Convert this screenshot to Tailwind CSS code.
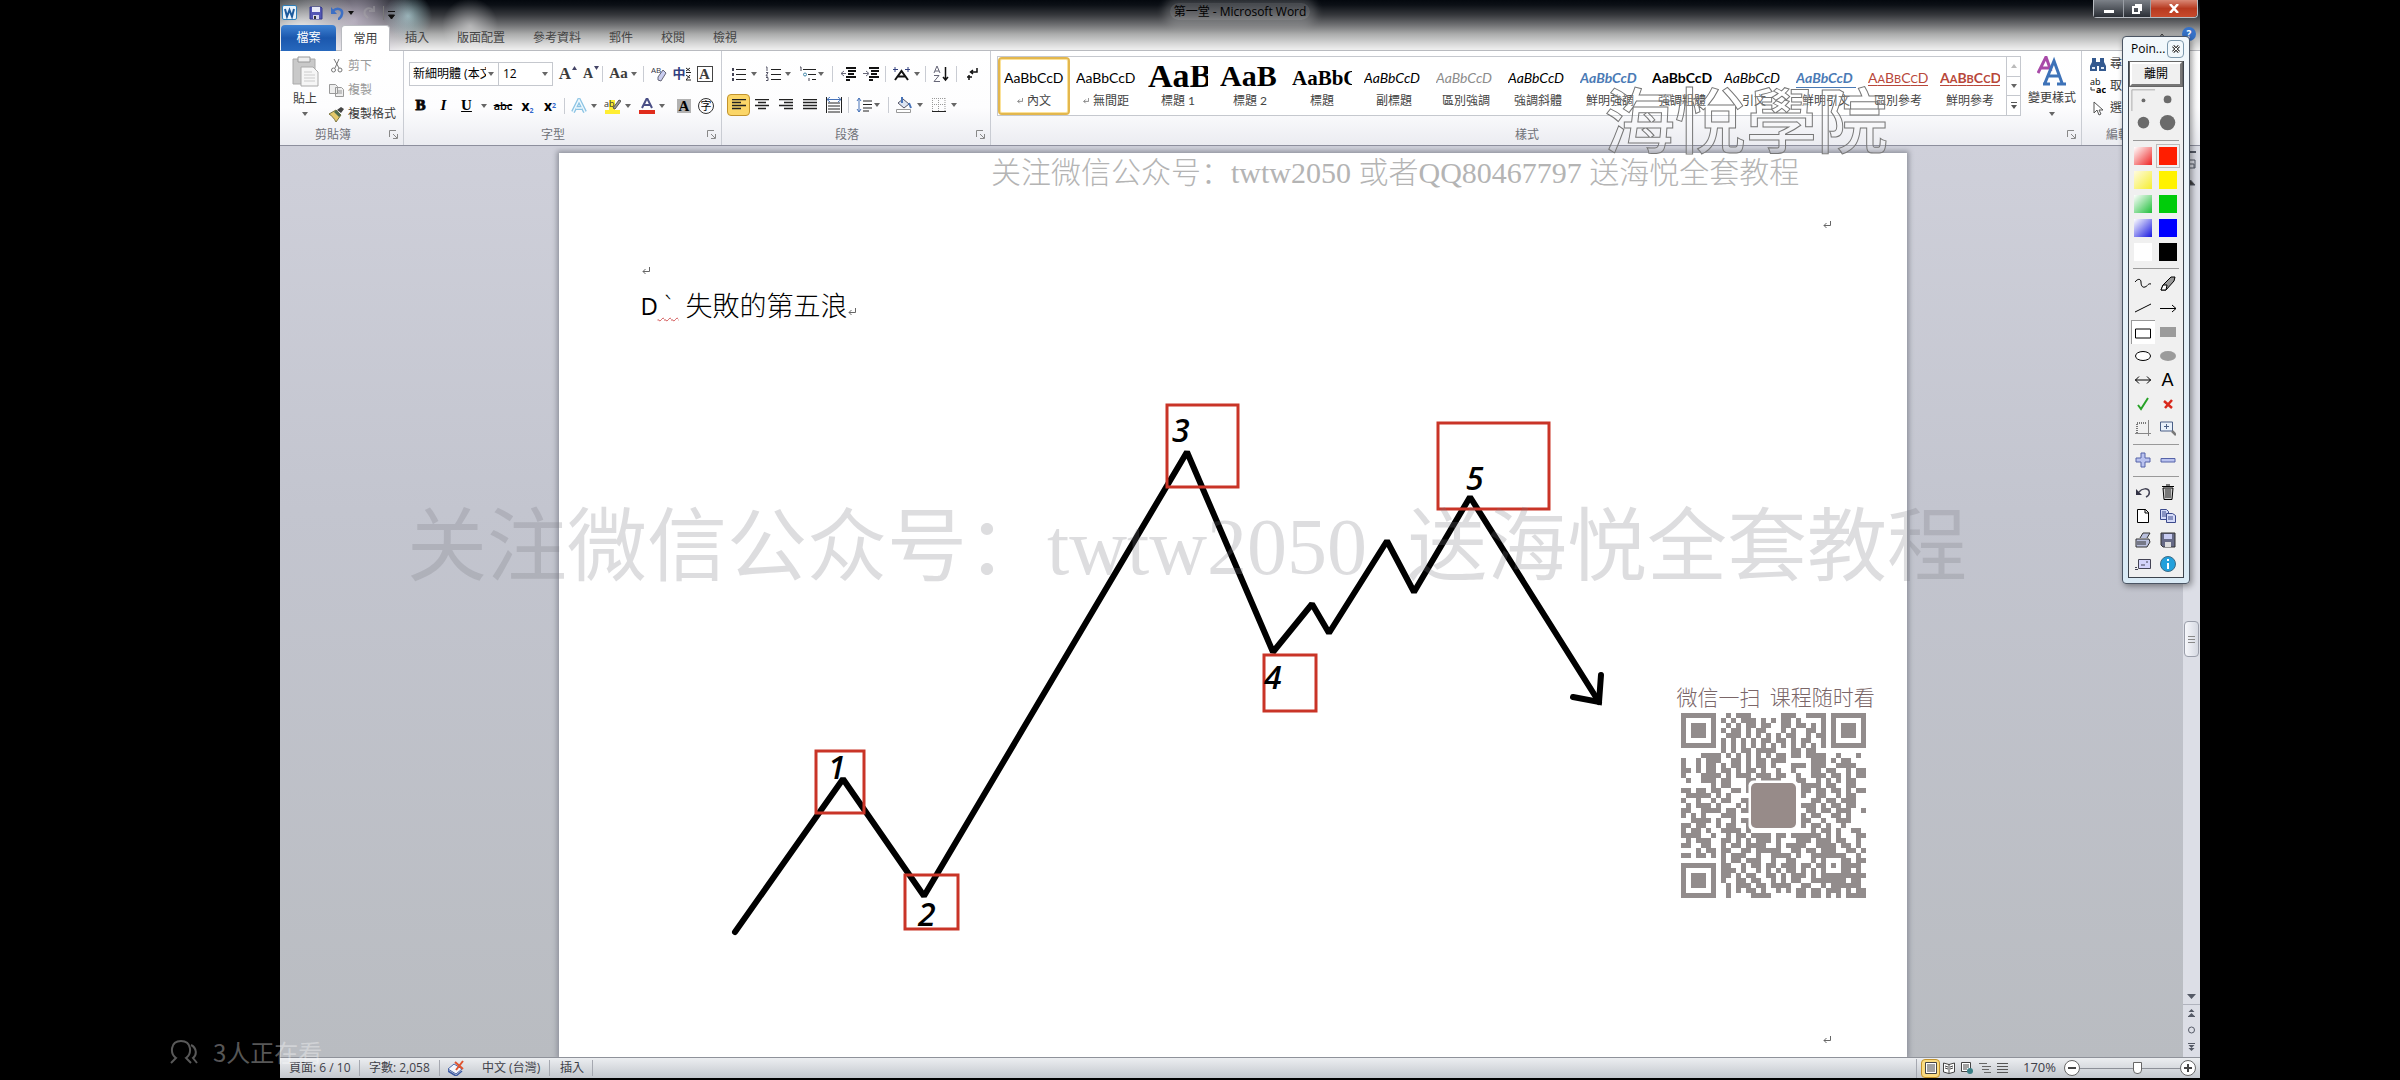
<!DOCTYPE html>
<html lang="zh-Hant">
<head>
<meta charset="utf-8">
<title>第一堂 - Microsoft Word</title>
<script src="https://cdn.jsdelivr.net/npm/@tailwindcss/browser@4"></script>
</head>
<body class="relative flex h-screen flex-col overflow-hidden bg-black pl-[280px] pr-[200px] font-['Open_Sans','Noto_Sans_CJK_TC',sans-serif] text-xs text-[#3b3b3b]">

<svg class="hidden">
  <symbol id="caret" viewBox="0 0 6 4"><path d="M0 0h6L3 4z" fill="#666"/></symbol>
  <symbol id="launch" viewBox="0 0 9 9"><path d="M.5 7V.5H7M4 4l4 4M8.500 4v4.500H4" fill="none" stroke="#888"/></symbol>
  <symbol id="ret" viewBox="0 0 8 8"><path d="M7.500 0v4.500H1M3.500 2L1 4.500 3.500 7" fill="none" stroke="#666"/></symbol>
</svg>

<div class="flex min-h-0 flex-1 flex-col">
  <!-- Title bar and tabs -->
  <header class="relative h-[51px] shrink-0 border-b border-[#b9bbc0] bg-[linear-gradient(to_bottom,#04080e_0px,#0c1016_5px,#36383c_15px,#707173_25px,#aaabab_34px,#d8d8d8_44px,#f0f0f0_50px)]">
    <div class="absolute inset-y-0 left-0 w-[240px] bg-[radial-gradient(circle_at_20px_36px,#ffffffee_0,#ffffff00_60px),radial-gradient(circle_at_75px_20px,#c9bfd2cc_0,#c9bfd200_60px),radial-gradient(circle_at_128px_16px,#b5dbe0bb_0,#b5dbe000_24px),radial-gradient(circle_at_190px_26px,#ffffff77_0,#ffffff00_28px)]"></div>
    <div class="relative flex h-[25px] items-center">
      <div class="flex w-[120px] items-center gap-2 pl-[2px]">
        <svg class="size-[15px]" viewBox="0 0 15 15"><rect x=".5" y=".5" width="14" height="14" rx="1.500" fill="#e8f2fb" stroke="#2e7fb8"/><path d="M3 4l2 7.500L7.500 5 10 11.500 12 4" fill="none" stroke="#1d5a9c" stroke-width="2"/></svg>
        <button aria-label="儲存" class="ml-1"><svg class="size-[14px]" viewBox="0 0 14 14"><path d="M1 1h11l1 1v11H1z" fill="#5357b5" stroke="#373b8e"/><path d="M3 1h8v5H3z" fill="#e8eaf8"/><path d="M4 9h6v4H4z" fill="#d5d8ee"/><path d="M5 10h2v3H5z" fill="#333"/></svg></button>
        <button aria-label="復原" class="flex items-center"><svg class="h-[14px] w-[13px]" viewBox="0 0 13 14"><path d="M2 5c4-4 10-2 9 3-.5 3-3 5-4 5" fill="none" stroke="#3d6fc4" stroke-width="2.500"/><path d="M0 1v7h6z" fill="#3d6fc4"/></svg><svg class="ml-1 h-1 w-[6px]"><path d="M0 0h6L3 4z" fill="#111"/></svg></button>
        <svg class="size-[13px] opacity-40" viewBox="0 0 13 13"><path d="M11 4C6 0 1 4 3 9l3 3M12 0v5H7" fill="none" stroke="#aaa" stroke-width="2"/></svg>
        <svg class="h-[14px] w-3 shrink-0" viewBox="0 0 12 14"><path d="M.5 0v14" stroke="#777"/><path d="M5 5.500h7M5.500 9h6l-3 4z" stroke="#111" fill="#111" stroke-width="1"/></svg>
      </div>
      <h1 class="absolute inset-x-0 top-1 text-center text-xs leading-4 text-black"><span class="rounded-full bg-white/25 px-1 shadow-[0_0_8px_6px_#ffffff33]">第一堂 - Microsoft Word</span></h1>
      <div class="absolute right-[2px] top-0 flex h-[18px] rounded-b border border-t-0 border-[#b8bcc2] text-white">
        <button aria-label="最小化" class="flex w-[29px] items-end justify-center bg-[linear-gradient(#7c8188,#2a2e35)] pb-1"><span class="h-[3px] w-[10px] bg-white"></span></button>
        <button aria-label="還原" class="flex w-[27px] items-center justify-center border-l border-[#9a9ea5] bg-[linear-gradient(#7c8188,#2a2e35)]"><svg class="size-[10px]" viewBox="0 0 10 10"><path d="M3 1h6v6M1 3h6v6H1z" fill="none" stroke="#fff" stroke-width="2"/></svg></button>
        <button aria-label="關閉" class="flex w-[47px] items-center justify-center rounded-br border-l border-[#9a9ea5] bg-[linear-gradient(#d98875,#b73a20_50%,#c84a2c)]"><svg class="h-[9px] w-[10px]" viewBox="0 0 10 9"><path d="M1 0l8 9M9 0L1 9" stroke="#fff" stroke-width="2.500"/></svg></button>
      </div>
    </div>
    <nav class="relative flex h-[26px] items-stretch pl-px">
      <button class="w-[55px] rounded-t bg-[linear-gradient(#3f83d4,#1b57ad_50%,#2768bd)] text-white">檔案</button>
      <button class="ml-[5px] mr-px w-[49px] rounded-t border border-b-0 border-[#b9bbc0] bg-white">常用</button>
      <button class="px-[14px] text-[#444]">插入</button>
      <button class="px-[14px] text-[#444]">版面配置</button>
      <button class="px-[14px] text-[#444]">參考資料</button>
      <button class="px-[14px] text-[#444]">郵件</button>
      <button class="px-[14px] text-[#444]">校閱</button>
      <button class="px-[14px] text-[#444]">檢視</button>
      <button aria-label="最小化功能區" class="ml-auto mr-4 flex"><svg class="mt-2 h-[5px] w-2"><path d="M1 5l3-4 3 4" fill="none" stroke="#333"/></svg></button>
      <button aria-label="說明" class="mr-1 mt-0.5 size-[14px] rounded-full bg-[#3672c8] text-[10px] font-bold leading-[14px] text-white">?</button>
    </nav>
  </header>

  <!-- Ribbon -->
  <div class="flex h-[95px] shrink-0 overflow-hidden border-b border-[#8d8f9d] bg-[linear-gradient(#ffffff,#fdfdfe_60%,#ebecf1)]">
    <section class="flex w-[124px] shrink-0 flex-col border-r border-[#c9ccd3]">
      <div class="flex min-h-0 flex-1 pt-[3px]">
        <button class="flex w-[46px] flex-col items-center justify-start pl-1 pt-0.5">
          <svg class="h-8 w-[27px] shrink-0" viewBox="0 0 27 32"><path d="M1 3h22v25H1z" fill="#c9c9c9" stroke="#aaa"/><path d="M6 1h12v5H6z" fill="#eee" stroke="#999"/><path d="M9 11h12l5 5v14H9z" fill="#f6f6f6" stroke="#aaa"/><path d="M12 16h8M12 19h11M12 22h11M12 25h11" stroke="#ccc"/></svg>
          <span class="leading-[22px]">貼上</span>
          <svg class="mt-0.5 h-1 w-[6px]"><use href="#caret"/></svg>
        </button>
        <div class="flex flex-col items-start pl-[3px] leading-6">
          <button class="flex h-6 shrink-0 items-center gap-1 pl-px text-[#999]"><svg class="size-[14px]" viewBox="0 0 14 14" fill="none" stroke="#777"><path d="M4 0l5 9M9 0L5 9"/><circle cx="3.500" cy="11" r="2"/><circle cx="10" cy="11" r="2"/></svg>剪下</button>
          <button class="flex h-6 shrink-0 items-center gap-1 text-[#999]"><svg class="h-[13px] w-[15px]" viewBox="0 0 15 13" fill="#eee" stroke="#999"><path d="M.5.5h6l2 2v7h-8zM6.500 3.500h6l2 2v7h-8zM8 7h5M8 9h5"/></svg>複製</button>
          <button class="flex h-6 shrink-0 items-center gap-1"><svg class="size-[15px]" viewBox="0 0 15 15"><path d="M8 3l4-3 3 2-3 4z" fill="#444"/><path d="M0 7l7-4 5 5-5 7c-2-4-4-6-7-8z" fill="#e5c96a" stroke="#7b7640"/><path d="M7 3l5 5-2 2-5-5z" fill="#4f6d50"/></svg>複製格式</button>
        </div>
      </div>
      <div class="flex h-[21px] shrink-0 items-center pl-[35px] text-[#6f7178]">剪貼簿<svg class="ml-auto mr-[5px] size-[9px]"><use href="#launch"/></svg></div>
    </section>

    <section class="flex w-[318px] shrink-0 flex-col border-r border-[#c9ccd3]">
      <div class="flex flex-1 flex-col gap-2 pl-[5px] pt-[11px]">
        <div class="flex h-6 items-center">
          <div class="relative h-6 w-[90px] border border-[#c5c8ce] bg-white"><select aria-label="字型" class="h-full w-[76px] appearance-none overflow-hidden pl-[3px] text-xs text-black"><option>新細明體 (本文)</option></select><svg class="absolute right-1 top-[9px] h-1 w-[6px]"><use href="#caret"/></svg></div>
          <div class="relative h-6 w-[54px] border border-l-0 border-[#c5c8ce] bg-white"><select aria-label="字型大小" class="h-full w-10 appearance-none pl-1 text-xs text-black"><option>12</option></select><svg class="absolute right-1 top-[9px] h-1 w-[6px]"><use href="#caret"/></svg></div>
          <button class="relative w-6 font-['Liberation_Serif'] text-[17px] font-bold leading-6">A<svg class="absolute right-0 top-[4px] h-1 w-[5px]"><path d="M0 4h5L2.500 0z" fill="#446"/></svg></button>
          <button class="relative w-[22px] font-['Liberation_Serif'] text-sm font-bold leading-6">A<svg class="absolute right-0 top-[4px] h-1 w-[5px]"><path d="M0 0h5L2.500 4z" fill="#446"/></svg></button>
          <span class="mx-[3px] h-4 w-px bg-[#c9ccd3]"></span>
          <button class="flex w-[34px] items-center justify-center gap-[3px] font-['Liberation_Serif'] text-[15px] font-bold">Aa<svg class="h-1 w-[6px] shrink-0"><use href="#caret"/></svg></button>
          <span class="mx-[3px] h-4 w-px bg-[#c9ccd3]"></span>
          <button aria-label="清除格式" class="flex w-[23px] justify-center"><svg class="size-4" viewBox="0 0 16 16"><text x="0" y="7" font-size="8" fill="#334">AB</text><path d="M7 11l5-7 3 3-5 8-3-1z" fill="#c9cdf0" stroke="#667"/></svg></button>
          <button aria-label="注音標示" class="flex w-[23px] items-center justify-center text-[13px] font-bold text-[#32407e]">中<svg class="h-[14px] w-[5px]" viewBox="0 0 5 14"><path d="M0 1l4 3M4 1L0 4M0 5.500h5M0 8l4 3M4 8l-4 5h5" fill="none" stroke="#222"/></svg></button>
          <button class="flex w-[23px] justify-center"><span class="size-4 border border-[#444] bg-white font-['Liberation_Serif'] text-[15px] font-bold leading-[14px]">A</span></button>
        </div>
        <div class="flex h-6 items-center text-black">
          <button class="w-[23px] font-['Liberation_Serif'] text-[15px] font-bold [-webkit-text-stroke:1px_#111]">B</button>
          <button class="w-[23px] font-['Liberation_Serif'] text-[15px] font-bold italic">I</button>
          <button class="w-[23px] font-['Liberation_Serif'] text-[15px] font-bold underline">U</button>
          <svg class="mx-[3px] h-1 w-[6px]"><use href="#caret"/></svg>
          <button class="w-[26px] text-[11px] font-semibold line-through">abc</button>
          <button class="w-[23px] text-sm font-bold">x<sub class="text-[7px] text-[#36c]">2</sub></button>
          <button class="w-[22px] text-sm font-bold">x<sup class="text-[7px] text-[#36c]">2</sup></button>
          <span class="mx-[3px] h-4 w-px bg-[#c9ccd3]"></span>
          <button aria-label="文字效果" class="flex w-[35px] items-center gap-1 pl-[3px]"><svg class="size-4" viewBox="0 0 16 16"><path d="M2 14L8 2l6 12M5 10h6" fill="none" stroke="#8cc4e4" stroke-width="4"/><path d="M2 14L8 2l6 12M5 10h6" fill="none" stroke="#eef8fd" stroke-width="1.500"/></svg><svg class="h-1 w-[6px]"><use href="#caret"/></svg></button>
          <button aria-label="醒目提示" class="flex w-[35px] items-center gap-1 pl-px"><svg class="h-4 w-[17px]" viewBox="0 0 17 16"><path d="M1 12h15v4H1zM5 2h6v10H5z" fill="#ffee33"/><text x="0" y="9" font-size="9" fill="#333">ab</text><path d="M9 10l6-8 2 1-6 8z" fill="#999" stroke="#555"/></svg><svg class="h-1 w-[6px]"><use href="#caret"/></svg></button>
          <button aria-label="字型色彩" class="flex w-[35px] items-center gap-1 pl-px"><svg class="h-4 w-[16px]" viewBox="0 0 16 16"><path d="M3 10L8 0l5 10M5 7h6" fill="none" stroke="#4a4f86" stroke-width="2"/><path d="M0 12h16v4H0z" fill="#e02c1c"/></svg><svg class="h-1 w-[6px]"><use href="#caret"/></svg></button>
          <button class="flex w-[22px] justify-center"><span class="size-[14px] bg-[#b2b2b2] font-['Liberation_Serif'] text-[15px] font-bold leading-[14px]">A</span></button>
          <button class="flex w-[22px] justify-center"><span class="size-4 rounded-full border border-[#333] text-[11px] leading-[14px]">字</span></button>
        </div>
      </div>
      <div class="flex h-[21px] items-center pl-[137px] text-[#6f7178]">字型<svg class="ml-auto mr-[5px] size-[9px]"><use href="#launch"/></svg></div>
    </section>

    <section class="flex w-[269px] shrink-0 flex-col border-r border-[#c9ccd3]">
      <div class="flex flex-1 flex-col gap-[7px] pl-[5px] pt-[11px]">
        <div class="flex h-6 items-center pl-1">
          <button aria-label="項目符號" class="flex w-[34px] items-center gap-1"><svg class="size-4" viewBox="0 0 16 16"><path d="M5 3.500h10M5 8.500h10M5 13.500h10" stroke="#222"/><path d="M1 2h2v3H1zM1 7h2v3H1zM1 12h2v3H1z" fill="#445"/></svg><svg class="h-1 w-[6px]"><use href="#caret"/></svg></button>
          <button aria-label="編號" class="flex w-[34px] items-center gap-1"><svg class="size-4" viewBox="0 0 16 16"><path d="M6 3.500h10M6 8.500h10M6 13.500h10" stroke="#222"/><path d="M1 1h1v4M1 6.500h2L1 10h2M1 11.500h2v3H1" fill="none" stroke="#556"/></svg><svg class="h-1 w-[6px]"><use href="#caret"/></svg></button>
          <button aria-label="多層次清單" class="flex w-[30px] items-center gap-0.5"><svg class="h-4 w-[17px]" viewBox="0 0 17 16"><path d="M4 3.500h13M9 8.500h8M13 13.500h4" stroke="#222"/><path d="M1 1h1v4M10 12v3" stroke="#445" fill="none"/><circle cx="6" cy="8.500" r="1.500" fill="none" stroke="#48a"/></svg><svg class="h-1 w-[6px]"><use href="#caret"/></svg></button>
          <span class="mx-[3px] h-4 w-px bg-[#c9ccd3]"></span>
          <button aria-label="減少縮排" class="flex w-[23px] justify-center"><svg class="size-4" viewBox="0 0 16 16"><path d="M6 2h10M8 5h8M8 8h6M6 11h10M6 14h4" stroke="#111" stroke-width="2"/><path d="M6 7.500H1M4 5L1 7.500 4 10" stroke="#667" fill="none"/></svg></button>
          <button aria-label="增加縮排" class="flex w-[23px] justify-center"><svg class="size-4" viewBox="0 0 16 16"><path d="M6 2h10M8 5h8M8 8h6M6 11h10M6 14h4" stroke="#111" stroke-width="2"/><path d="M0 7.500h5M3 5l3 2.500L3 10" stroke="#667" fill="none"/></svg></button>
          <span class="mx-[3px] h-4 w-px bg-[#c9ccd3]"></span>
          <button aria-label="亞洲配置" class="flex w-[33px] items-center gap-1 pl-1"><svg class="h-4 w-[17px]" viewBox="0 0 17 16"><path d="M2 14L8.500 5 15 14M5 10.500h7" fill="none" stroke="#111" stroke-width="2"/><path d="M0 3.500h5M2 1v5M12 3.500h5M15 1v5" stroke="#33417e"/></svg><svg class="h-1 w-[6px]"><use href="#caret"/></svg></button>
          <span class="mx-[3px] h-4 w-px bg-[#c9ccd3]"></span>
          <button aria-label="排序" class="flex w-6 justify-center"><svg class="size-4" viewBox="0 0 16 16"><path d="M1 7l3-7 3 7M2 5h4M1 9.500h5l-5 6h6" fill="none" stroke="#667"/><path d="M12.500 1v13M10 11l2.500 3 2.500-3" fill="none" stroke="#111" stroke-width="1.500"/></svg></button>
          <span class="mx-[3px] h-4 w-px bg-[#c9ccd3]"></span>
          <button aria-label="顯示編輯標記" class="flex w-6 justify-center"><svg class="size-3" viewBox="0 0 12 12"><path d="M11 0v4H5M7 2L4.500 4 7 6M1 9h5M3 7v5" fill="none" stroke="#111" stroke-width="1.500"/></svg></button>
        </div>
        <div class="flex h-6 items-center">
          <button aria-label="靠左對齊" class="flex h-[22px] w-[23px] items-center justify-center rounded-sm border border-[#c2932d] bg-[#fbd668]"><svg class="h-3 w-[14px]"><path d="M0 .5h14M0 3.500h9M0 6.500h14M0 9.500h9" stroke="#222" stroke-width="1.500"/></svg></button>
          <button aria-label="置中" class="flex w-6 justify-center"><svg class="h-3 w-[14px]"><path d="M0 .5h14M3 3.500h8M0 6.500h14M3 9.500h8" stroke="#222" stroke-width="1.500"/></svg></button>
          <button aria-label="靠右對齊" class="flex w-6 justify-center"><svg class="h-3 w-[14px]"><path d="M0 .5h14M5 3.500h9M0 6.500h14M5 9.500h9" stroke="#222" stroke-width="1.500"/></svg></button>
          <button aria-label="左右對齊" class="flex w-6 justify-center"><svg class="h-3 w-[14px]"><path d="M0 .5h14M0 3.500h14M0 6.500h14M0 9.500h14" stroke="#222" stroke-width="1.500"/></svg></button>
          <button aria-label="分散對齊" class="flex w-[23px] justify-center"><svg class="size-4" viewBox="0 0 16 16"><path d="M.5 0v16M15.500 0v16M2 6h12M2 9h12M2 12h12M2 15h12" stroke="#222"/><path d="M1 2.500h14M4 0L1 2.500 4 5M12 0l3 2.500L12 5" stroke="#4672b8" fill="none"/></svg></button>
          <span class="mx-[3px] h-4 w-px bg-[#c9ccd3]"></span>
          <button aria-label="行距" class="flex w-[33px] items-center gap-0.5 pl-1"><svg class="size-4" viewBox="0 0 16 16"><path d="M7 4h9M7 7.500h9M7 11h9M7 14h6" stroke="#222"/><path d="M3 1v14M1 4l2-3 2 3M1 12l2 3 2-3" stroke="#4672b8" fill="none"/></svg><svg class="h-1 w-[6px]"><use href="#caret"/></svg></button>
          <span class="mx-[3px] h-4 w-px bg-[#c9ccd3]"></span>
          <button aria-label="網底" class="flex w-[35px] items-center gap-[5px] pl-1"><svg class="size-4" viewBox="0 0 16 16"><path d="M2 6l5-4 6 5-5 4z" fill="#dce4f2" stroke="#556"/><path d="M6 0v6M13 6l2 5" stroke="#4672b8" stroke-width="2"/><path d="M.5 12.500h14v3H.5z" fill="#fff" stroke="#999"/></svg><svg class="h-1 w-[6px]"><use href="#caret"/></svg></button>
          <button aria-label="框線" class="flex w-[34px] items-center gap-[5px] pl-[5px]"><svg class="size-[14px]" viewBox="0 0 14 14"><path d="M.5 0v14M6.500 0v14M13 0v14M0 .5h14M0 6.500h14" stroke="#999" stroke-dasharray="1 1"/><path d="M0 13.500h14" stroke="#222"/></svg><svg class="h-1 w-[6px]"><use href="#caret"/></svg></button>
        </div>
      </div>
      <div class="flex h-[21px] items-center pl-[113px] text-[#6f7178]">段落<svg class="ml-auto mr-[5px] size-[9px]"><use href="#launch"/></svg></div>
    </section>

    <section class="flex w-[1091px] shrink-0 flex-col border-r border-[#c9ccd3]">
      <div class="flex flex-1 pl-[6px] pt-[5px]">
        <div class="flex h-[60px] border border-[#c5c8ce] bg-white font-['Lato','Noto_Sans_CJK_TC',sans-serif] text-black">
          <button class="flex w-[72px] flex-col items-center justify-start rounded-sm border-2 border-[#e3b74e] pt-[7px] shadow-[inset_0_0_0_1px_#fbe29a]"><span class="h-[25px] w-[60px] overflow-hidden whitespace-nowrap text-left text-sm leading-6">AaBbCcD</span><span class="flex items-center gap-1 leading-5 text-[#444]"><svg class="size-[6px]" viewBox="0 0 8 8"><use href="#ret"/></svg>內文</span></button>
          <button class="flex w-[72px] flex-col items-center justify-start pt-[9px]"><span class="h-[25px] w-[60px] overflow-hidden whitespace-nowrap text-left text-sm leading-6">AaBbCcD</span><span class="flex items-center gap-1 leading-5 text-[#444]"><svg class="size-[6px]" viewBox="0 0 8 8"><use href="#ret"/></svg>無間距</span></button>
          <button class="flex w-[72px] flex-col items-center justify-start pt-[9px]"><span class="h-[25px] w-[60px] overflow-hidden whitespace-nowrap text-left font-['Liberation_Serif'] text-[34px] font-bold leading-5">AaBb</span><span class="leading-5 text-[#444]">標題 1</span></button>
          <button class="flex w-[72px] flex-col items-center justify-start pt-[9px]"><span class="h-[25px] w-[60px] overflow-hidden whitespace-nowrap text-left font-['Liberation_Serif'] text-[30px] font-bold leading-5">AaB</span><span class="leading-5 text-[#444]">標題 2</span></button>
          <button class="flex w-[72px] flex-col items-center justify-start pt-[9px]"><span class="h-[25px] w-[60px] overflow-hidden whitespace-nowrap text-left font-['Liberation_Serif'] text-[21px] font-bold leading-6">AaBbC</span><span class="leading-5 text-[#444]">標題</span></button>
          <button class="flex w-[72px] flex-col items-center justify-start pt-[9px]"><span class="h-[25px] w-[60px] overflow-hidden whitespace-nowrap text-left text-sm italic leading-6">AaBbCcD</span><span class="leading-5 text-[#444]">副標題</span></button>
          <button class="flex w-[72px] flex-col items-center justify-start pt-[9px]"><span class="h-[25px] w-[60px] overflow-hidden whitespace-nowrap text-left text-sm italic leading-6 text-[#8c8c8c]">AaBbCcD</span><span class="leading-5 text-[#444]">區別強調</span></button>
          <button class="flex w-[72px] flex-col items-center justify-start pt-[9px]"><span class="h-[25px] w-[60px] overflow-hidden whitespace-nowrap text-left text-sm italic leading-6">AaBbCcD</span><span class="leading-5 text-[#444]">強調斜體</span></button>
          <button class="flex w-[72px] flex-col items-center justify-start pt-[9px]"><span class="h-[25px] w-[60px] overflow-hidden whitespace-nowrap text-left text-sm font-bold italic leading-6 text-[#4a7ab5]">AaBbCcD</span><span class="leading-5 text-[#444]">鮮明強調</span></button>
          <button class="flex w-[72px] flex-col items-center justify-start pt-[9px]"><span class="h-[25px] w-[60px] overflow-hidden whitespace-nowrap text-left text-sm font-bold leading-6">AaBbCcD</span><span class="leading-5 text-[#444]">強調粗體</span></button>
          <button class="flex w-[72px] flex-col items-center justify-start pt-[9px]"><span class="h-[25px] w-[60px] overflow-hidden whitespace-nowrap text-left text-sm italic leading-6">AaBbCcD</span><span class="leading-5 text-[#444]">引文</span></button>
          <button class="flex w-[72px] flex-col items-center justify-start pt-[9px]"><span class="mb-[3px] h-[22px] w-[60px] overflow-hidden whitespace-nowrap border-b border-[#4a7ab5] text-left text-sm font-bold italic leading-6 text-[#4a7ab5]">AaBbCcD</span><span class="leading-5 text-[#444]">鮮明引文</span></button>
          <button class="flex w-[72px] flex-col items-center justify-start pt-[9px]"><span class="h-[25px] w-[60px] overflow-hidden whitespace-nowrap text-left text-sm leading-6 text-[#b8473a] underline underline-offset-2">A<span class="text-[11px]">A</span>B<span class="text-[11px]">B</span>C<span class="text-[11px]">C</span>D</span><span class="leading-5 text-[#444]">區別參考</span></button>
          <button class="flex w-[72px] flex-col items-center justify-start pt-[9px]"><span class="h-[25px] w-[60px] overflow-hidden whitespace-nowrap text-left text-sm font-bold leading-6 text-[#b8473a] underline underline-offset-2">A<span class="text-[11px]">A</span>B<span class="text-[11px]">B</span>C<span class="text-[11px]">C</span>D</span><span class="leading-5 text-[#444]">鮮明參考</span></button>
          <div class="flex w-[14px] flex-col border-l border-[#c5c8ce]">
            <button aria-label="上一列" class="flex flex-1 items-center justify-center"><svg class="h-1 w-[6px]"><path d="M0 4h6L3 0z" fill="#bbb"/></svg></button>
            <button aria-label="下一列" class="flex flex-1 items-center justify-center border-y border-[#c5c8ce]"><svg class="h-1 w-[6px]"><use href="#caret"/></svg></button>
            <button aria-label="其他" class="flex flex-1 items-center justify-center"><svg class="h-[7px] w-[6px]"><path d="M0 .5h6" stroke="#555"/><path d="M0 3h6L3 7z" fill="#555"/></svg></button>
          </div>
        </div>
        <button class="ml-1 flex w-[54px] flex-col items-center">
          <svg class="h-[31px] w-[30px]" viewBox="0 0 30 31"><path d="M1 17L9 1l5 14M4 12h8" fill="none" stroke="#a84aa8" stroke-width="3"/><path d="M8 27L17 5l8 22M12 20h10M6 28h7M20 28h9" fill="none" stroke="#3d72b8" stroke-width="3"/></svg>
          <span class="whitespace-nowrap leading-[22px]">變更樣式</span>
          <svg class="mt-[3px] h-1 w-[6px]"><use href="#caret"/></svg>
        </button>
      </div>
      <div class="flex h-[21px] items-center pl-[524px] text-[#6f7178]">樣式<svg class="ml-auto mr-[5px] size-[9px]"><use href="#launch"/></svg></div>
    </section>

    <section class="flex min-w-0 flex-1 flex-col">
      <div class="flex flex-1 flex-col whitespace-nowrap pl-2 pt-[2px]">
        <button class="flex h-[22px] items-center gap-1"><svg class="h-[13px] w-4 shrink-0" viewBox="0 0 16 13"><path d="M2 0h4v4h4V0h4v4l2 4v5H9V8H7v5H0V8l2-4z" fill="#33598f"/><path d="M2 9h3v2H2zM11 9h3v2h-3z" fill="#dfe8f5"/></svg>尋找</button>
        <button class="flex h-[22px] items-center gap-1"><svg class="h-4 w-4 shrink-0" viewBox="0 0 16 16"><text x="0" y="7" font-size="9">ab</text><text x="6" y="15" font-size="9" font-weight="700">ac</text><path d="M1 9v3h4" fill="none" stroke="#333"/></svg>取代</button>
        <button class="flex h-[22px] items-center gap-1"><svg class="h-[15px] w-4 shrink-0" viewBox="0 0 16 15"><path d="M4 1v11l3-3 2 5 2-1-2-4h4z" fill="#fff" stroke="#555"/></svg>選取</button>
      </div>
      <div class="flex h-[21px] items-center whitespace-nowrap pl-6 text-[#6f7178]">編輯</div>
    </section>
  </div>

  <!-- Document area -->
  <main class="flex min-h-0 flex-1 overflow-hidden bg-[linear-gradient(#cfd0da,#c3c5cf_40%,#b9bcc1)]">
    <div class="flex min-w-0 flex-1 justify-center pl-[2px] pt-[7px]">
      <article class="flex w-[1348px] shrink-0 flex-col bg-white text-black shadow-[0_0_5px_2px_#8f929c]">
        <svg class="ml-auto mr-[76px] mt-[68px] size-2 shrink-0"><use href="#ret"/></svg>
        <svg class="ml-[83px] mt-[38px] size-2 shrink-0"><use href="#ret"/></svg>
        <h2 class="ml-[82px] mt-[11px] flex h-10 shrink-0 items-center text-[27px] font-light leading-10"><span class="w-[17px] font-['Open_Sans'] text-[24px] font-normal">D</span><span class="w-7 whitespace-pre underline decoration-[#d05050] decoration-wavy decoration-1">&nbsp;`&nbsp;</span>失敗的第五浪<svg class="mt-3 size-2"><use href="#ret"/></svg></h2>
        <div class="flex items-start pt-[53px]">
          <svg class="ml-[141px] h-[570px] w-[920px] shrink-0" viewBox="700 380 920 570" fill="none" role="img" aria-label="失敗的第五浪走勢圖">
            <path d="M735 933L843 780 924 897 1187 453 1273 653 1312 605 1329 634 1387 542 1414 593 1470 498 1599 703" stroke="#000" stroke-width="6" stroke-linejoin="bevel" stroke-linecap="round"/>
            <path d="M1573 698L1599 703 1601 676" stroke="#000" stroke-width="6" stroke-linecap="round"/>
            <g stroke="#c93427" stroke-width="3"><path d="M816 752h48v62h-48zM905 876h53v54h-53zM1167 406h71v82h-71zM1264 656h52v56h-52zM1438 424h111v86h-111z"/></g>
            <g fill="#000" class="font-['Open_Sans'] text-[32px] font-semibold italic"><text x="828" y="780">1</text><text x="918" y="927">2</text><text x="1172" y="443">3</text><text x="1264" y="690">4</text><text x="1466" y="491">5</text></g>
          </svg>
          <figure class="ml-[57px] mt-[305px] w-[202px]">
            <figcaption lang="zh-Hans" class="whitespace-pre font-['Noto_Sans_CJK_SC',sans-serif] text-[21px] font-light leading-6 text-[#7a6668]">微信一扫  课程随时看</figcaption>
            <svg id="qr" class="ml-1 mt-[5px] size-[185px]" viewBox="0 0 37 37" shape-rendering="crispEdges" role="img" aria-label="QR code"></svg>
          </figure>
        </div>
        <svg class="ml-auto mr-[76px] mt-auto mb-[13px] size-2 shrink-0"><use href="#ret"/></svg>
      </article>
    </div>
    <!-- Vertical scroll bar -->
    <div class="flex w-[17px] shrink-0 flex-col items-center bg-[#dcdee6]">
      <svg class="mt-1 h-10 w-[14px]" viewBox="0 0 14 40" fill="none" stroke="#555a66"><path d="M1 2h10" stroke-width="2"/><path d="M2 10h8v8H2zM5 14h4v4" /><path d="M1 35h9l-4.500-5z" fill="#444"/></svg>
      <button aria-label="捲軸" class="mt-[431px] flex h-9 w-[15px] flex-col items-center justify-center gap-0.5 rounded-sm border border-[#9a9eaa] bg-[linear-gradient(to_right,#f6f7fb,#d6d9e2)]"><span class="h-px w-[7px] bg-[#888]"></span><span class="h-px w-[7px] bg-[#888]"></span><span class="h-px w-[7px] bg-[#888]"></span></button>
      <svg class="mt-auto h-[66px] w-[17px]" viewBox="0 0 17 66" fill="#555a66"><path d="M4 3h9L8.500 8zM8.500 18l3 3h-6zM8.500 22l3 3h-6zM5 25h7v1H5zM8.500 60l3-3h-6zM8.500 57l3-3h-6zM5 52h7v1H5z"/><path d="M0 13.500h17" stroke="#b0b3bd"/><circle cx="8.500" cy="39" r="3" fill="none" stroke="#555a66"/></svg>
    </div>
  </main>

  <!-- Status bar -->
  <footer class="mb-[2px] flex h-[21px] shrink-0 items-center border-t border-[#8f929a] bg-[linear-gradient(#eceef1,#c3c7cd)] text-[#3e4048]">
    <span class="w-[79px] pl-[9px]">頁面: 6 / 10</span>
    <span class="w-[80px] border-l border-[#a5a8b0] pl-[9px]">字數: 2,058</span>
    <span class="flex w-[110px] items-center gap-[18px] border-l border-[#a5a8b0] pl-2"><svg class="size-4 shrink-0" viewBox="0 0 16 16"><path d="M0 9l6-5 8 5-6 5z" fill="#f4f6fb" stroke="#4a66a8"/><path d="M0 9v2l8 5 6-5" fill="none" stroke="#3a59a4" stroke-width="1.500"/><path d="M7 2l8 7M15 1L8 10" stroke="#e0532e" stroke-width="2"/></svg><span class="whitespace-nowrap">中文 (台灣)</span></span>
    <span class="w-11 border-x border-[#a5a8b0] pl-[10px]">插入</span>
    <div class="ml-auto flex items-center border-l border-[#a5a8b0] pl-1">
      <button aria-label="整頁模式" class="flex h-[19px] w-[19px] items-center justify-center rounded-sm border border-[#c2932d] bg-[#fbdc80]"><svg class="size-3" viewBox="0 0 12 12"><path d="M.5.5h11v11H.500zM2 3h8M2 5h8M2 7h8M2 9h8" fill="#fff" stroke="#444"/></svg></button>
      <button aria-label="閱讀版面" class="flex w-[18px] justify-center"><svg class="size-3" viewBox="0 0 12 12"><path d="M.5 1L6 2.500 11.500 1v9L6 11.500.5 10zM6 2v9M2 4l3 1M2 6l3 1M10 4L7 5M10 6L7 7" fill="#fff" stroke="#444"/></svg></button>
      <button aria-label="Web 版面配置" class="flex w-[18px] justify-center"><svg class="size-3" viewBox="0 0 12 12"><path d="M.5.5h9v9h-9zM2 3h6M2 5h6M2 7h4" fill="#fff" stroke="#444"/><circle cx="9" cy="9" r="3" fill="#3a7f86"/></svg></button>
      <button aria-label="大綱模式" class="flex w-[18px] justify-center"><svg class="size-3" viewBox="0 0 12 12"><path d="M0 1.500h8M3 4.500h9M3 7.500h7M5 10.500h7" stroke="#666"/></svg></button>
      <button aria-label="草稿" class="flex w-[18px] justify-center"><svg class="size-3" viewBox="0 0 12 12"><path d="M0 1.500h11M0 4.500h11M0 7.500h11M0 10.500h11" stroke="#555"/></svg></button>
      <span class="w-[52px] pl-[11px] text-[13px]">170%</span>
      <button aria-label="縮小" class="flex size-4 items-center justify-center rounded-full border border-[#666] bg-white"><span class="h-0.5 w-2 bg-[#444]"></span></button>
      <input aria-label="顯示比例" type="range" min="0" max="100" value="58" class="h-4 w-[100px] appearance-none bg-[linear-gradient(#8d9098,#8d9098)] bg-[length:100%_1px] bg-center bg-no-repeat [&::-webkit-slider-thumb]:h-3 [&::-webkit-slider-thumb]:w-[9px] [&::-webkit-slider-thumb]:appearance-none [&::-webkit-slider-thumb]:rounded-b [&::-webkit-slider-thumb]:border [&::-webkit-slider-thumb]:border-[#666] [&::-webkit-slider-thumb]:bg-white">
      <button aria-label="放大" class="mr-1 flex size-4 items-center justify-center rounded-full border border-[#666] bg-white"><svg class="size-2"><path d="M0 4h8M4 0v8" stroke="#444" stroke-width="2"/></svg></button>
    </div>
  </footer>
</div>

<!-- Overlays on the video -->
<p lang="zh-Hans" class="pointer-events-none absolute left-[991px] top-[155px] whitespace-pre font-['Liberation_Serif','Noto_Sans_CJK_SC',serif] text-[30px] font-light leading-9 text-[#b4b4b4]">关注微信公众号：twtw2050 或者QQ80467797 送海悦全套教程</p>
<p lang="zh-Hans" class="pointer-events-none absolute left-[407px] top-[497px] whitespace-pre font-['Liberation_Serif','Noto_Sans_CJK_SC',serif] text-[80px] leading-[100px] text-[#77777f]/25">关注微信公众号：twtw2050  送海悦全套教程</p>
<p class="pointer-events-none absolute left-[1604px] top-[78px] whitespace-nowrap font-['Noto_Sans_CJK_TC',sans-serif] text-[71px] font-medium leading-[76px] text-white/20 [-webkit-text-stroke:1px_#777]">海悅學院</p>
<div class="absolute bottom-3 left-[170px] flex items-center gap-[14px] font-['Noto_Sans_CJK_SC',sans-serif] text-2xl leading-8 text-white/35">
  <svg class="h-6 w-[29px]" viewBox="0 0 29 24" fill="none" stroke="currentColor" stroke-width="2"><path d="M1 23l5-5c-6-4-6-17 5-17s11 13 5 17l5 5M21 5c6 3 6 10 2 13l4 5"/></svg>
  <span>3人正在看</span>
</div>

<!-- Pen palette -->
<aside class="absolute right-[210px] top-9 w-[68px] rounded-sm border border-[#4b5563] bg-[linear-gradient(#f2f8fc,#d9eaf5)] px-[5px] pb-[5px] text-black shadow-[2px_2px_6px_#0006]">
  <div class="flex h-6 items-center justify-between pl-[3px]"><span>Poin...</span><button aria-label="關閉面板" class="flex h-[18px] w-[17px] items-center justify-center rounded-sm border border-[#7c98ad]"><svg class="size-2" viewBox="0 0 8 8"><path d="M1 1l6 6M7 1L1 7" stroke="#444" stroke-width="3"/><path d="M1 1l6 6M7 1L1 7" stroke="#fff"/></svg></button></div>
  <div class="border border-[#3c434c] bg-[#f0f0f0] pb-px">
    <div class="h-[26px] px-px"><button class="h-6 w-full border-2 border-b-[#777] border-l-white border-r-[#777] border-t-white bg-[#f0f0f0] leading-5 outline outline-1 outline-[#666]">離開</button></div>
    <svg class="block h-12 w-full" viewBox="0 0 56 48"><path d="M3 23V1h24" fill="none" stroke="#aaa"/><g fill="#6b6b6b"><circle cx="15" cy="12" r="2"/><circle cx="40" cy="11" r="4"/><circle cx="15" cy="35" r="6"/><circle cx="40" cy="35" r="8"/></g></svg>
    <div class="flex h-2 items-center px-1"><span class="h-px w-full bg-[#999]"></span></div>
    <div class="grid grid-cols-[25px_25px] place-items-center pl-px [&>button]:my-[3px] [&>button]:size-[18px]">
      <button aria-label="透明紅" class="bg-[linear-gradient(135deg,#fff,#e22)]"></button><button aria-label="紅" class="bg-[#ff1e00] outline outline-1 outline-offset-2 outline-[#bbb]"></button>
      <button aria-label="透明黃" class="bg-[linear-gradient(135deg,#fffbe0,#f5ee30)]"></button><button aria-label="黃" class="bg-[#fff200]"></button>
      <button aria-label="透明綠" class="bg-[linear-gradient(135deg,#fff,#1fbf3a)]"></button><button aria-label="綠" class="bg-[#00cc0a]"></button>
      <button aria-label="透明藍" class="bg-[linear-gradient(135deg,#fff,#1717e0)]"></button><button aria-label="藍" class="bg-[#0000ff]"></button>
      <button aria-label="白" class="bg-white"></button><button aria-label="黑" class="bg-black"></button>
    </div>
    <div class="flex h-2 items-center px-1"><span class="h-px w-full bg-[#999]"></span></div>
    <div class="grid grid-cols-[25px_25px] place-items-center pl-px [&>button]:flex [&>button]:h-6 [&>button]:items-center [&_svg]:size-4">
      <button aria-label="曲線"><svg viewBox="0 0 16 16"><path d="M0 6c3-4 6-3 6 0s1 6 4 5 3-4 6-3" fill="none" stroke="#000"/></svg></button>
      <button aria-label="橡皮擦"><svg viewBox="0 0 16 16"><path d="M1 14L3 9l8-8h4l-1 4-8 9z" fill="#999" stroke="#000"/><path d="M1 14l2-5h4l-1 5z" fill="#fff" stroke="#000"/></svg></button>
      <button aria-label="直線"><svg viewBox="0 0 16 16"><path d="M0 12L16 4" stroke="#000"/></svg></button>
      <button aria-label="箭頭"><svg viewBox="0 0 16 16"><path d="M0 8.500h16M12 5l4 3.500-4 3.500" fill="none" stroke="#000"/></svg></button>
      <button aria-label="矩形" class="w-6 justify-center border-l border-t border-[#999] bg-white"><svg viewBox="0 0 16 16"><path d="M.5 4h15v9H.500z" fill="#fff" stroke="#000"/></svg></button>
      <button aria-label="實心矩形"><svg viewBox="0 0 16 16"><path d="M0 3h16v10H0z" fill="#9b9b9b"/></svg></button>
      <button aria-label="橢圓"><svg viewBox="0 0 16 16"><ellipse cx="8" cy="8" rx="7.500" ry="4.500" fill="#fff" stroke="#000"/></svg></button>
      <button aria-label="實心橢圓"><svg viewBox="0 0 16 16"><ellipse cx="8" cy="8" rx="8" ry="5" fill="#9b9b9b"/></svg></button>
      <button aria-label="雙向箭頭"><svg viewBox="0 0 16 16"><path d="M0 8h16M4 4.500L.5 8 4 11.500M12 4.500L15.500 8 12 11.500" fill="none" stroke="#000"/></svg></button>
      <button class="font-['Liberation_Sans'] text-lg">A</button>
      <button aria-label="勾選"><svg viewBox="0 0 16 16"><path d="M3 9l3 4 7-11" fill="none" stroke="#27a227" stroke-width="2"/></svg></button>
      <button aria-label="叉號"><svg viewBox="0 0 16 16"><path d="M4 5l8 7M12 4L5 12" fill="none" stroke="#d8281c" stroke-width="2.500"/></svg></button>
      <button aria-label="裁切"><svg viewBox="0 0 16 16"><path d="M2 13V3h10" fill="none" stroke="#000" stroke-dasharray="1 1"/><path d="M13.500 0v16M0 13.500h16" stroke="#888"/></svg></button>
      <button aria-label="放大鏡"><svg viewBox="0 0 16 16"><path d="M.5 2h12v9H.500zM6.500 4v5M4 6.500h5" fill="#e8f0fa" stroke="#4a5f86"/><path d="M12 11l4 4" stroke="#777" stroke-width="2.500"/></svg></button>
    </div>
    <div class="flex h-2 items-center px-1"><span class="h-px w-full bg-[#999]"></span></div>
    <div class="grid grid-cols-[25px_25px] place-items-center pl-px [&>button]:flex [&>button]:h-6 [&>button]:items-center [&_svg]:size-4">
      <button aria-label="增加"><svg viewBox="0 0 16 16"><path d="M6 1h4v5h5v4h-5v5H6v-5H1V6h5z" fill="#b9c2ef" stroke="#5563a8"/></svg></button>
      <button aria-label="減少"><svg viewBox="0 0 16 16"><path d="M1 6.500h14v3.500H1z" fill="#b9c2ef" stroke="#5563a8"/></svg></button>
    </div>
    <div class="flex h-2 items-center px-1"><span class="h-px w-full bg-[#999]"></span></div>
    <div class="grid grid-cols-[25px_25px] place-items-center pl-px [&>button]:flex [&>button]:h-6 [&>button]:items-center [&_svg]:size-4">
      <button aria-label="復原繪圖"><svg viewBox="0 0 16 16"><path d="M4 8c3-4 9-4 10-1s-1 5-3 6" fill="none" stroke="#445" stroke-width="1.500"/><path d="M1 5v6h6z" fill="#334"/></svg></button>
      <button aria-label="刪除"><svg viewBox="0 0 16 16"><path d="M3 4h10l-1 11.500H4zM2 2.500h12M6 1h4" fill="#ccc" stroke="#000"/><path d="M6 5v9M8 5v9M10 5v9" stroke="#222"/></svg></button>
      <button aria-label="新頁"><svg viewBox="0 0 16 16"><path d="M2.500 1.500h8l3 3v10h-11zM10 1v4h4" fill="#fff" stroke="#000"/></svg></button>
      <button aria-label="複製頁"><svg viewBox="0 0 16 16"><path d="M.5 1.500h6l2 2v8h-8zM2 4h4M2 6h4M2 8h4" fill="#d4daf8" stroke="#3c4a8c"/><path d="M6.500 5.500h6l3 2v7h-9zM8 9h5M8 11h5" fill="#d4daf8" stroke="#3c4a8c"/></svg></button>
      <button aria-label="列印"><svg viewBox="0 0 16 16"><path d="M5 6l3-5h7l-3 5M1 7h13l1 3-3 5H1z" fill="#b9bfdc" stroke="#333"/><path d="M2 10h9M2 12h9" stroke="#333"/></svg></button>
      <button aria-label="儲存繪圖"><svg viewBox="0 0 16 16"><path d="M1 1h14v14H3l-2-2z" fill="#666a86" stroke="#333"/><path d="M4 2h8v5H4z" fill="#c8ccf2"/><path d="M5 10h6v5H5z" fill="#ddd"/></svg></button>
      <button aria-label="傳送"><svg viewBox="0 0 16 16"><path d="M3.500 3.500h12v9h-12zM6 9h4M11 6h2" fill="#d4d4fa" stroke="#445"/><path d="M0 11.500h2M0 13.500h3" stroke="#445"/></svg></button>
      <button aria-label="資訊"><svg viewBox="0 0 16 16"><circle cx="8" cy="8" r="7.500" fill="#22a0dc" stroke="#3a6c88"/><path d="M8 7v6M8 3v2" stroke="#fff" stroke-width="2"/></svg></button>
    </div>
  </div>
</aside>

<script>
  // Module rows of the QR code; finder and alignment patterns are stamped on top.
  const rows = [
    ".........#.###......###..####........",
    "........#.#.###.#.#.##.#....#........",
    ".........#.#.##.##..##.##.#.#........",
    "........#.##.#.##...#.#..##.#........",
    ".........###.#.#.#.#.##..#.##........",
    "........#.#.#.#.##.##.#.##..#........",
    "........#.#.#.#.#.#.#.#.#.#.#........",
    "........#.#.##.####...##.##..........",
    "....####.#.#.#.#.#.##.##.####..#...#.",
    "#..#.###..##.#.##.###.....###.#.##...",
    "#..#.##.#.##.#.##.#...###.###..####..",
    "##.#.##.##.#.##.#..#..#...##.##..#.##",
    "#...####.#.###.###.##..#..###.##.#.##",
    ".#..###.##...##.####...##..#.#.#.##..",
    "......#.##...#..........####.##..##..",
    "##.##.##..##.#..........##.##.##.#.##",
    ".#####.#.#..............#..##..#.##..",
    "#..#..#.##..##............##.##.###..",
    ".#.###.#...#.#..........###.#.##.##..",
    "##..####.##.##...........##.##.###..#",
    "#.#.#...###.............#.##..##.#...",
    "..####.#..#.##..........##..#..###...",
    "##.##..#.##..#..........#.##.#..#....",
    "#.##.#..####.#............#.##.#..##.",
    "####..#..#.##.####.##.######.#.#...##",
    ".#.###..##.#.#.###.#...###.###.##..#.",
    "##..##..#.##.####..#.####..####.##.#.",
    "...#.##.##..##.#####..##.##.###..##.#",
    "##.##.#.#.###..#..####.#..###.###..#.",
    "........#.##.###..#..##...#.#....#.##",
    "........##..#.##.##.###.##.##....###.",
    "........###.#..#.#.#.##.#.#.#....#.#.",
    "........##.#.##..##.#.###.#.#....####",
    "........#..##.##..#.#.##..#######.##.",
    ".........#.###.##.####..##..#.######.",
    ".........#.#.##.#..#.#.##.##.###.#.##",
    ".........#....####.....##.##.#.#.####"
  ];
  const cells = rows.map(r => r.split(""));
  const stamp = (cx, cy, rad) => {
    for (let y = -rad; y <= rad; y++) for (let x = -rad; x <= rad; x++) {
      const d = Math.max(Math.abs(x), Math.abs(y));
      cells[cy + y][cx + x] = d === rad || d <= rad - 2 ? "#" : ".";
    }
  };
  stamp(3, 3, 3); stamp(33, 3, 3); stamp(3, 33, 3); stamp(30, 30, 2);
  let d = "";
  cells.forEach((r, y) => r.forEach((c, x) => { if (c === "#") d += `M${x} ${y}h1v1h-1z`; }));
  document.getElementById("qr").innerHTML =
    `<path d="${d}" fill="#928c8c"/><rect x="13.500" y="13.500" width="10" height="10" rx="1" fill="#fff" shape-rendering="auto"/><rect x="14" y="14" width="9" height="9" rx="1" fill="#978b89" shape-rendering="auto"/>`;
</script>
</body>
</html>
